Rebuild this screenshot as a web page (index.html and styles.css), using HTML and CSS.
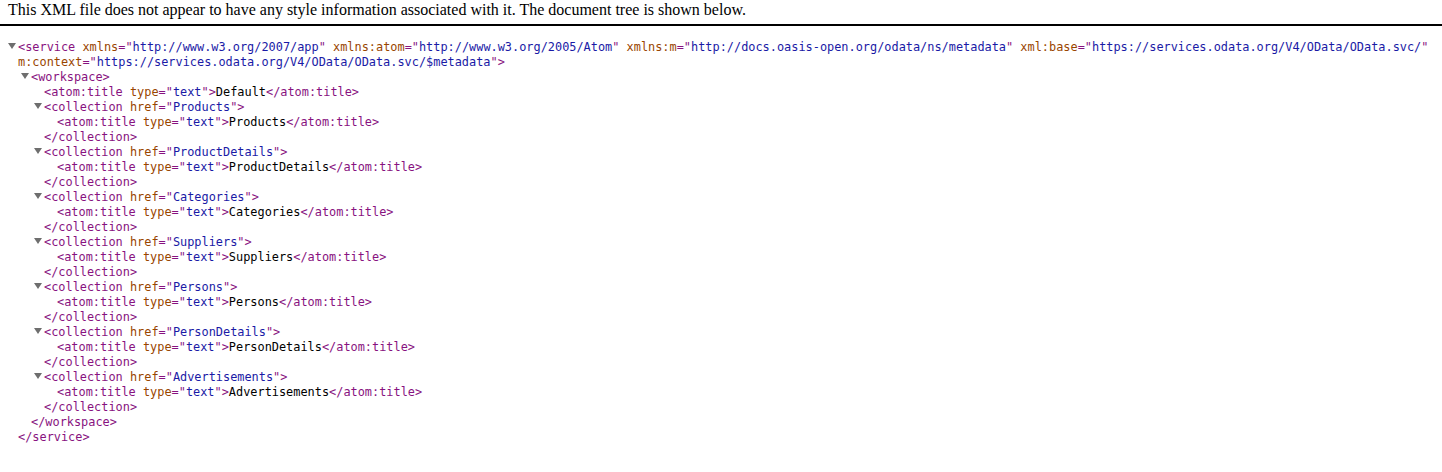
FILE: index.html
```html
<!DOCTYPE html>
<html lang="en">
  <head>
    <meta charset="UTF-8" />
    <title>OData.svc</title>
    <link rel="stylesheet" href="styles.css">
  </head>
  <body>
    <div class="header">This XML file does not appear to have any style information associated with it. The document tree is shown below.</div>

    <div class="tree">
      <div class="line"><span class="toggle"></span><span class="tag">&lt;service <span class="name">xmlns</span>="<span class="value">http://www.w3.org/2007/app</span>" <span class="name">xmlns:atom</span>="<span class="value">http://www.w3.org/2005/Atom</span>" <span class="name">xmlns:m</span>="<span class="value">http://docs.oasis-open.org/odata/ns/metadata</span>" <span class="name">xml:base</span>="<span class="value">https://services.odata.org/V4/OData/OData.svc/</span>" <span class="name">m:context</span>="<span class="value">https://services.odata.org/V4/OData/OData.svc/$metadata</span>"&gt;</span></div>
      <div class="children">
        <div class="line"><span class="toggle"></span><span class="tag">&lt;workspace&gt;</span></div>
        <div class="children">
          <div class="line"><span class="tag">&lt;atom:title <span class="name">type</span>="<span class="value">text</span>"&gt;</span>Default<span class="tag">&lt;/atom:title&gt;</span></div>

          <div class="line"><span class="toggle"></span><span class="tag">&lt;collection <span class="name">href</span>="<span class="value">Products</span>"&gt;</span></div>
          <div class="children">
            <div class="line"><span class="tag">&lt;atom:title <span class="name">type</span>="<span class="value">text</span>"&gt;</span>Products<span class="tag">&lt;/atom:title&gt;</span></div>
          </div>
          <div class="line"><span class="tag">&lt;/collection&gt;</span></div>

          <div class="line"><span class="toggle"></span><span class="tag">&lt;collection <span class="name">href</span>="<span class="value">ProductDetails</span>"&gt;</span></div>
          <div class="children">
            <div class="line"><span class="tag">&lt;atom:title <span class="name">type</span>="<span class="value">text</span>"&gt;</span>ProductDetails<span class="tag">&lt;/atom:title&gt;</span></div>
          </div>
          <div class="line"><span class="tag">&lt;/collection&gt;</span></div>

          <div class="line"><span class="toggle"></span><span class="tag">&lt;collection <span class="name">href</span>="<span class="value">Categories</span>"&gt;</span></div>
          <div class="children">
            <div class="line"><span class="tag">&lt;atom:title <span class="name">type</span>="<span class="value">text</span>"&gt;</span>Categories<span class="tag">&lt;/atom:title&gt;</span></div>
          </div>
          <div class="line"><span class="tag">&lt;/collection&gt;</span></div>

          <div class="line"><span class="toggle"></span><span class="tag">&lt;collection <span class="name">href</span>="<span class="value">Suppliers</span>"&gt;</span></div>
          <div class="children">
            <div class="line"><span class="tag">&lt;atom:title <span class="name">type</span>="<span class="value">text</span>"&gt;</span>Suppliers<span class="tag">&lt;/atom:title&gt;</span></div>
          </div>
          <div class="line"><span class="tag">&lt;/collection&gt;</span></div>

          <div class="line"><span class="toggle"></span><span class="tag">&lt;collection <span class="name">href</span>="<span class="value">Persons</span>"&gt;</span></div>
          <div class="children">
            <div class="line"><span class="tag">&lt;atom:title <span class="name">type</span>="<span class="value">text</span>"&gt;</span>Persons<span class="tag">&lt;/atom:title&gt;</span></div>
          </div>
          <div class="line"><span class="tag">&lt;/collection&gt;</span></div>

          <div class="line"><span class="toggle"></span><span class="tag">&lt;collection <span class="name">href</span>="<span class="value">PersonDetails</span>"&gt;</span></div>
          <div class="children">
            <div class="line"><span class="tag">&lt;atom:title <span class="name">type</span>="<span class="value">text</span>"&gt;</span>PersonDetails<span class="tag">&lt;/atom:title&gt;</span></div>
          </div>
          <div class="line"><span class="tag">&lt;/collection&gt;</span></div>

          <div class="line"><span class="toggle"></span><span class="tag">&lt;collection <span class="name">href</span>="<span class="value">Advertisements</span>"&gt;</span></div>
          <div class="children">
            <div class="line"><span class="tag">&lt;atom:title <span class="name">type</span>="<span class="value">text</span>"&gt;</span>Advertisements<span class="tag">&lt;/atom:title&gt;</span></div>
          </div>
          <div class="line"><span class="tag">&lt;/collection&gt;</span></div>
        </div>
        <div class="line"><span class="tag">&lt;/workspace&gt;</span></div>
      </div>
      <div class="line"><span class="tag">&lt;/service&gt;</span></div>
    </div>
  </body>
</html>
```

FILE: styles.css
```css
body {
  margin: 0;
  background: #fff;
  color: #000;
}

.header {
  font-family: "Liberation Serif", serif;
  font-size: 16px;
  line-height: 18px;
  padding: 1px 8px 5px;
  border-bottom: 2px solid #000;
}

.tree {
  margin-top: 14px;
  padding: 0 4px 0 18px;
  font-family: "DejaVu Sans Mono", monospace;
  font-size: 11.9px;
  line-height: 15px;
}

.children {
  margin-left: 13px;
}

.toggle {
  display: inline-block;
  width: 0;
  height: 0;
  margin-left: -10px;
  margin-right: 2px;
  border-top: 6px solid #6e6e6e;
  border-left: 4px solid transparent;
  border-right: 4px solid transparent;
  vertical-align: 2px;
}

.tag {
  color: #881280;
}

.name {
  color: #994500;
}

.value {
  color: #1a1aa6;
}
```
